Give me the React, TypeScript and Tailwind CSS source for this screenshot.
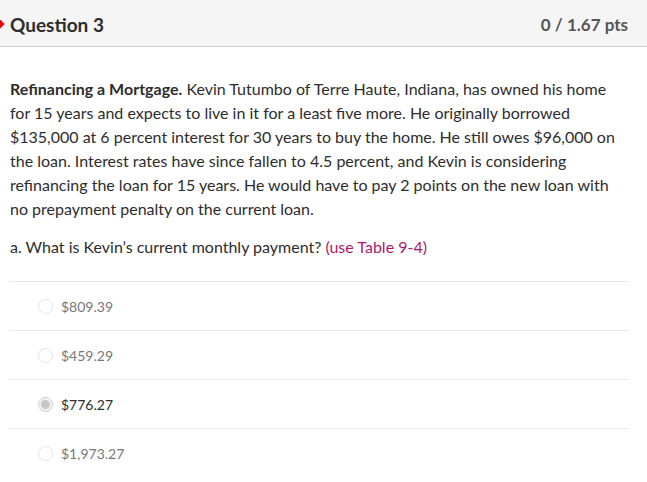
import React from "react";

const options = [
  { label: "$809.39", selected: false },
  { label: "$459.29", selected: false },
  { label: "$776.27", selected: true },
  { label: "$1,973.27", selected: false },
];

function Radio({ selected }: { selected: boolean }) {
  return (
    <span
      className={
        "flex h-[15px] w-[15px] items-center justify-center rounded-full border " +
        (selected ? "border-[#d0d0d0] bg-[#f2f2f2]" : "border-[#e4e4e4] bg-white")
      }
    >
      {selected ? <span className="h-[9px] w-[9px] rounded-full bg-[#c8c8c8]" /> : null}
    </span>
  );
}

export default function App() {
  return (
    <div
      className="relative h-[482px] w-[647px] overflow-hidden bg-white text-[#2d3b45]"
      style={{ fontFamily: "Lato, 'Noto Sans', sans-serif" }}
    >
      <div className="relative flex h-[47px] items-center justify-between border-b border-[#c7cdd1] bg-[#f5f5f5] pl-[10px] pr-[19px] pt-[4px]">
        <span className="absolute left-[-5px] top-[20px] h-[8px] w-[8px] rotate-45 bg-[#e00b0b]" />
        <span className="text-[19px] font-bold text-[#2d2d2d]">Question 3</span>
        <span className="text-[17px] font-bold text-[#555555]">0 / 1.67 pts</span>
      </div>
      <div className="w-[622px] pl-[10px] pt-[30px]">
        <p className="text-[16px] leading-[24px] text-[#2d2d2d]">
          <strong>Refinancing a Mortgage.</strong> Kevin Tutumbo of Terre Haute, Indiana, has owned his home
          for 15 years and expects to live in it for a least five more. He originally borrowed $135,000 at 6
          percent interest for 30 years to buy the home. He still owes $96,000 on the loan. Interest rates
          have since fallen to 4.5 percent, and Kevin is considering refinancing the loan for 15 years. He
          would have to pay 2 points on the new loan with no prepayment penalty on the current loan.
        </p>
        <p className="mt-[14px] text-[16px] leading-[24px] text-[#2d2d2d]">
          a. What is Kevin’s current monthly payment? <span className="text-[#b0186a]">(use Table 9-4)</span>
        </p>
      </div>
      <div className="ml-[9px] mt-[22px] w-[619px]">
        {options.map((o) => (
          <div key={o.label} className="flex h-[49px] items-center border-t border-[#e8e8e8] pl-[29px]">
            <Radio selected={o.selected} />
            <span
              className={
                "ml-[8px] text-[14px] " + (o.selected ? "text-[#2d2d2d]" : "text-[#777777]")
              }
            >
              {o.label}
            </span>
          </div>
        ))}
      </div>
    </div>
  );
}
